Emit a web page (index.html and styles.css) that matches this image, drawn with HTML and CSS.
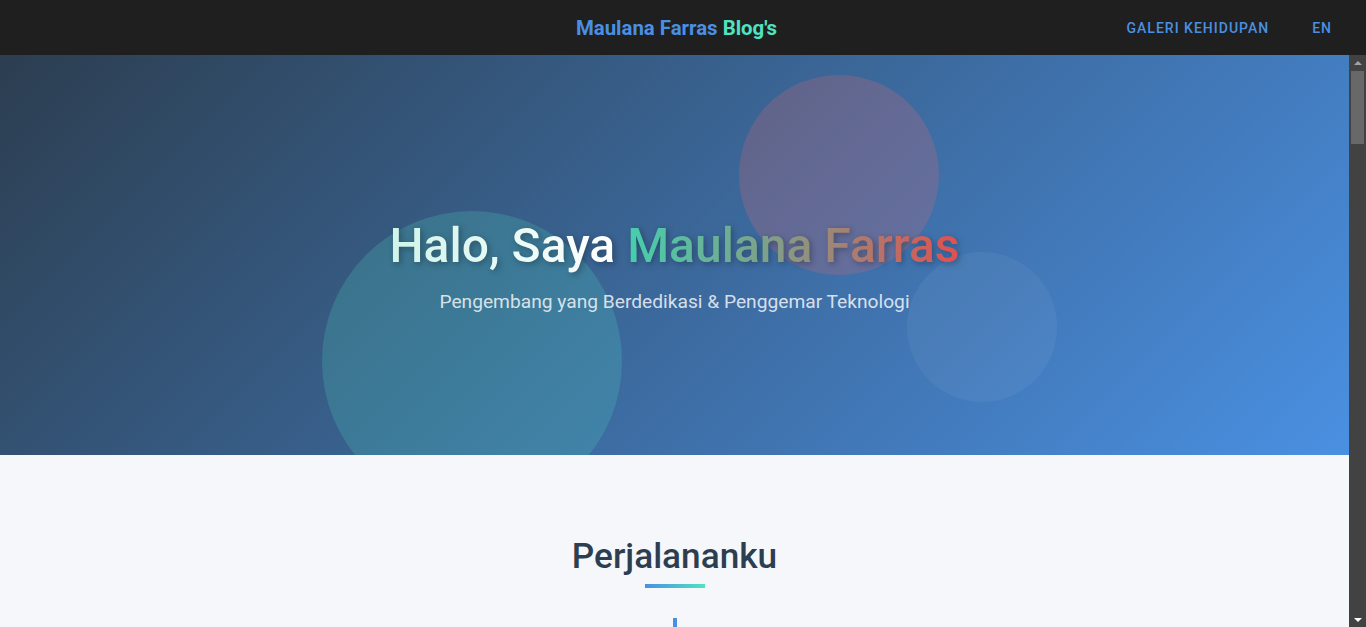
FILE: index.html
```html
<!DOCTYPE html>
<html lang="id">
<head>
<meta charset="utf-8">
<title>Maulana Farras Blog's</title>
<link rel="stylesheet" href="styles.css">
</head>
<body>
<header class="topbar">
  <div class="topbar-left"></div>
  <a class="logo" href="#"><span class="logo-main">Maulana Farras</span> <span class="logo-accent">Blog's</span></a>
  <nav class="nav">
    <a href="#" class="nav-link">Galeri Kehidupan</a>
    <a href="#" class="nav-link">EN</a>
  </nav>
</header>
<div class="viewport">
  <main class="scroller">
    <section class="hero">
      <span class="bubble bubble-pink"></span>
      <span class="bubble bubble-teal"></span>
      <span class="bubble bubble-blue"></span>
      <div class="hero-content">
        <h1 class="hero-title"><span class="hero-hello">Halo, Saya</span> <span class="hero-name">Maulana Farras</span></h1>
        <p class="hero-sub">Pengembang yang Berdedikasi &amp; Penggemar Teknologi</p>
      </div>
    </section>
    <section class="journey">
      <h2 class="section-title">Perjalananku</h2>
      <div class="title-bar"></div>
      <div class="timeline"></div>
    </section>
  </main>
  <div class="scrollbar" aria-hidden="true">
    <div class="sb-btn"><span class="sb-arrow-up"></span></div>
    <div class="sb-track"><div class="sb-thumb"></div></div>
    <div class="sb-btn"><span class="sb-arrow-down"></span></div>
  </div>
</div>
</body>
</html>
```
FILE: styles.css
```css
* { box-sizing: border-box; }
html, body { margin: 0; padding: 0; height: 100%; }
body {
  font-family: Roboto, "Noto Sans", "Liberation Sans", sans-serif;
  display: flex;
  flex-direction: column;
  overflow: hidden;
  background: #f5f7fb;
}
.topbar {
  flex: 0 0 55px;
  height: 55px;
  background: #1f1f1f;
  display: grid;
  grid-template-columns: 1fr auto 1fr;
  align-items: center;
  padding: 0 34px 0 21px;
}
.logo {
  text-decoration: none;
  font-weight: 700;
  font-size: 20.4px;
}
.logo-main { color: #4a90e2; }
.logo-accent { color: #50e3c2; }
.nav {
  display: flex;
  justify-content: flex-end;
  gap: 43px;
}
.nav-link {
  color: #4a90e2;
  text-decoration: none;
  text-transform: uppercase;
  font-size: 14px;
  font-weight: 500;
  letter-spacing: 1px;
}
.viewport {
  flex: 1 1 auto;
  min-height: 0;
  display: flex;
}
.scroller {
  flex: 1 1 auto;
  min-width: 0;
  overflow: hidden;
  background: #f5f7fb;
}
.scrollbar {
  flex: 0 0 17px;
  width: 17px;
  background: #424242;
  display: flex;
  flex-direction: column;
}
.sb-btn {
  height: 15px;
  display: flex;
  align-items: center;
  justify-content: center;
}
.sb-arrow-up {
  width: 0; height: 0;
  border-left: 4px solid transparent;
  border-right: 4px solid transparent;
  border-bottom: 4px solid #a3a3a3;
}
.sb-arrow-down {
  width: 0; height: 0;
  border-left: 4px solid transparent;
  border-right: 4px solid transparent;
  border-top: 4px solid #ffffff;
}
.sb-track {
  flex: 1 1 auto;
  padding: 1px 2px 0;
}
.sb-thumb {
  height: 73px;
  background: #686868;
}
.hero {
  position: relative;
  height: 400px;
  overflow: hidden;
  background: linear-gradient(135deg, #2c3e50 0%, #4a90e2 100%);
  display: flex;
  align-items: center;
  justify-content: center;
}
.bubble {
  position: absolute;
  border-radius: 50%;
}
.bubble-pink {
  width: 200px; height: 200px;
  left: 739px; top: 20px;
  background: rgba(255, 107, 107, 0.2);
}
.bubble-teal {
  width: 300px; height: 300px;
  left: 322px; top: 156px;
  background: rgba(80, 227, 194, 0.2);
}
.bubble-blue {
  width: 150px; height: 150px;
  left: 907px; top: 197px;
  background: rgba(255, 255, 255, 0.05);
}
.hero-content {
  position: relative;
  text-align: center;
  margin-top: 20px;
}
.hero-title {
  margin: 0;
  font-size: 48px;
  font-weight: 500;
  line-height: 1.2;
  filter: drop-shadow(2px 2px 3px rgba(0, 0, 0, 0.3));
}
.hero-hello {
  background: linear-gradient(90deg, #d0f4ea, #ffffff);
  -webkit-background-clip: text;
  background-clip: text;
  color: transparent;
}
.hero-name {
  background: linear-gradient(90deg, #45cfae 0%, #8a9782 50%, #e34f4f 100%);
  -webkit-background-clip: text;
  background-clip: text;
  color: transparent;
}
.hero-sub {
  margin: 16px 0 0;
  font-size: 19.2px;
  color: rgba(255, 255, 255, 0.8);
}
.journey {
  padding: 80px 20px 0;
  text-align: center;
}
.section-title {
  margin: 0;
  font-size: 35.2px;
  font-weight: 500;
  line-height: 1.2;
  color: #2c3e50;
}
.title-bar {
  width: 60px;
  height: 4px;
  margin: 7px auto 0;
  background: linear-gradient(90deg, #4a90e2, #50e3c2);
}
.timeline {
  width: 4px;
  height: 400px;
  margin: 30px auto 0;
  background: #4a90e2;
}
```
